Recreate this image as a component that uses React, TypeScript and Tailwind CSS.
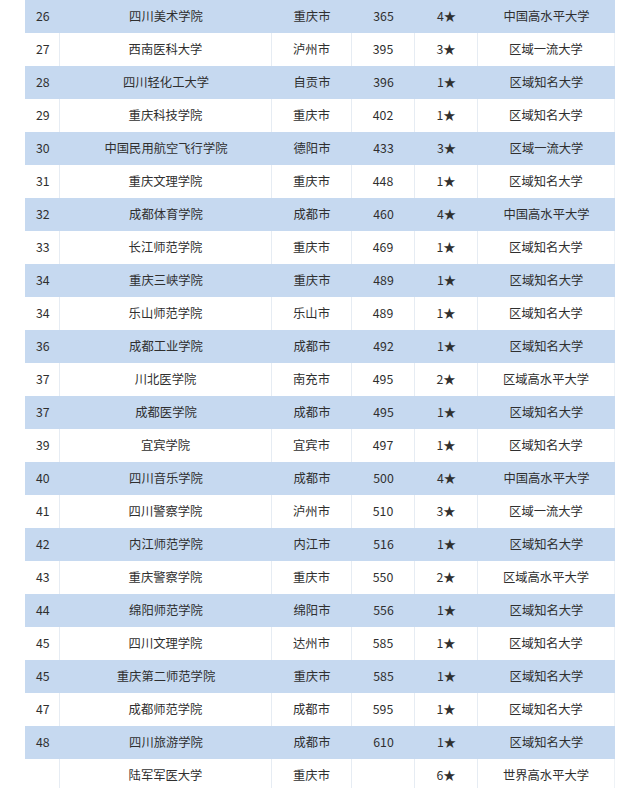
import React from "react";

type Row = [string, string, string, string, string, string];

const rows: Row[] = [
  ["26", "四川美术学院", "重庆市", "365", "4★", "中国高水平大学"],
  ["27", "西南医科大学", "泸州市", "395", "3★", "区域一流大学"],
  ["28", "四川轻化工大学", "自贡市", "396", "1★", "区域知名大学"],
  ["29", "重庆科技学院", "重庆市", "402", "1★", "区域知名大学"],
  ["30", "中国民用航空飞行学院", "德阳市", "433", "3★", "区域一流大学"],
  ["31", "重庆文理学院", "重庆市", "448", "1★", "区域知名大学"],
  ["32", "成都体育学院", "成都市", "460", "4★", "中国高水平大学"],
  ["33", "长江师范学院", "重庆市", "469", "1★", "区域知名大学"],
  ["34", "重庆三峡学院", "重庆市", "489", "1★", "区域知名大学"],
  ["34", "乐山师范学院", "乐山市", "489", "1★", "区域知名大学"],
  ["36", "成都工业学院", "成都市", "492", "1★", "区域知名大学"],
  ["37", "川北医学院", "南充市", "495", "2★", "区域高水平大学"],
  ["37", "成都医学院", "成都市", "495", "1★", "区域知名大学"],
  ["39", "宜宾学院", "宜宾市", "497", "1★", "区域知名大学"],
  ["40", "四川音乐学院", "成都市", "500", "4★", "中国高水平大学"],
  ["41", "四川警察学院", "泸州市", "510", "3★", "区域一流大学"],
  ["42", "内江师范学院", "内江市", "516", "1★", "区域知名大学"],
  ["43", "重庆警察学院", "重庆市", "550", "2★", "区域高水平大学"],
  ["44", "绵阳师范学院", "绵阳市", "556", "1★", "区域知名大学"],
  ["45", "四川文理学院", "达州市", "585", "1★", "区域知名大学"],
  ["45", "重庆第二师范学院", "重庆市", "585", "1★", "区域知名大学"],
  ["47", "成都师范学院", "成都市", "595", "1★", "区域知名大学"],
  ["48", "四川旅游学院", "成都市", "610", "1★", "区域知名大学"],
  ["", "陆军军医大学", "重庆市", "", "6★", "世界高水平大学"],
];

export default function App() {
  return (
    <div className="w-[640px] h-[788px] overflow-hidden bg-white px-[25px]">
      <div
        className="w-[590px] text-[12.3px] text-[#2f2f2f]"
        style={{ fontFamily: '"Noto Sans CJK SC", "Noto Sans", sans-serif' }}
      >
        {rows.map((r, i) => {
          const blue = i % 2 === 0;
          const cell = blue
            ? "flex items-center justify-center"
            : "flex items-center justify-center border-r border-[#e6ecf3]";
          return (
            <div
              key={i}
              className={
                "grid grid-cols-[35px_212px_80px_63px_63px_137px] h-[33px] " +
                (blue ? "bg-[#c6d9f0]" : "bg-white")
              }
            >
              <div
                className={
                  blue
                    ? "flex items-center pl-[11px]"
                    : "flex items-center pl-[11px] border-r border-[#e6ecf3]"
                }
              >
                {r[0]}
              </div>
              <div className={cell}>{r[1]}</div>
              <div className={cell}>{r[2]}</div>
              <div className={cell}>{r[3]}</div>
              <div className={cell}>{r[4]}</div>
              <div className={blue ? "flex items-center justify-center" : "flex items-center justify-center border-r border-[#eef2f6]"}>{r[5]}</div>
            </div>
          );
        })}
      </div>
    </div>
  );
}
